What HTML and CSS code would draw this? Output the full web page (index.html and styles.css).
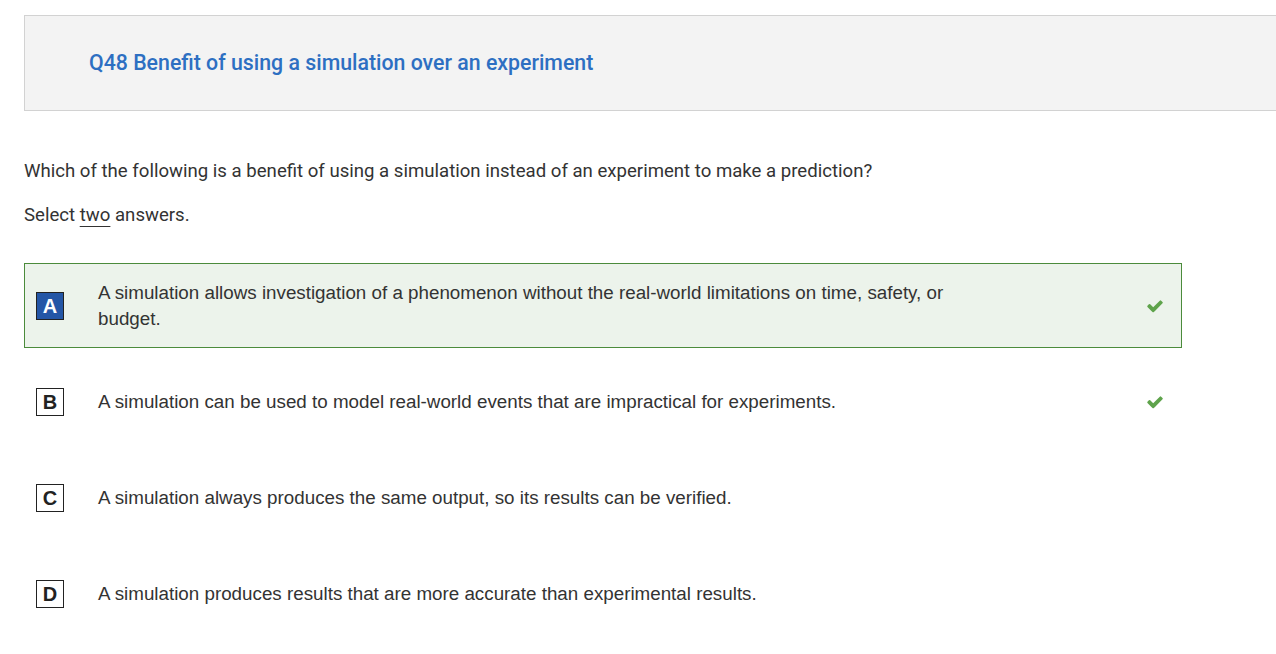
FILE: index.html
```html
<!DOCTYPE html>
<html>
<head>
<meta charset="utf-8">
<link rel="stylesheet" href="styles.css">
</head>
<body>
<div class="page">
  <div class="header">
    <h1 class="title">Q48 Benefit of using a simulation over an experiment</h1>
  </div>
  <p class="question">Which of the following is a benefit of using a simulation instead of an experiment to make a prediction?</p>
  <p class="instruction">Select <span class="ul">two</span> answers.</p>
  <div class="options">
    <div class="option selected">
      <span class="badge">A</span>
      <span class="text">A simulation allows investigation of a phenomenon without the real-world limitations on time, safety, or budget.</span>
      <span class="mark"><svg viewBox="0 0 1792 1792" width="18" height="18"><path fill="#5ea34b" d="M1671 566q0 40-28 68l-724 724-136 136q-28 28-68 28t-68-28l-136-136-362-362q-28-28-28-68t28-68l136-136q28-28 68-28t68 28l294 295 656-657q28-28 68-28t68 28l136 136q28 28 28 68z"/></svg></span>
    </div>
    <div class="option">
      <span class="badge">B</span>
      <span class="text">A simulation can be used to model real-world events that are impractical for experiments.</span>
      <span class="mark"><svg viewBox="0 0 1792 1792" width="18" height="18"><path fill="#5ea34b" d="M1671 566q0 40-28 68l-724 724-136 136q-28 28-68 28t-68-28l-136-136-362-362q-28-28-28-68t28-68l136-136q28-28 68-28t68 28l294 295 656-657q28-28 68-28t68 28l136 136q28 28 28 68z"/></svg></span>
    </div>
    <div class="option">
      <span class="badge">C</span>
      <span class="text">A simulation always produces the same output, so its results can be verified.</span>
      <span class="mark"></span>
    </div>
    <div class="option">
      <span class="badge">D</span>
      <span class="text">A simulation produces results that are more accurate than experimental results.</span>
      <span class="mark"></span>
    </div>
  </div>
</div>
</body>
</html>
```

FILE: styles.css
```css
html, body {
  margin: 0;
  padding: 0;
  background: #ffffff;
}
.page {
  padding: 15px 0 0 24px;
  overflow: hidden;
}
.header {
  background: #f3f3f3;
  border: 1px solid #d2d2d2;
  border-right: none;
  height: 94px;
  display: flex;
  align-items: center;
  padding-left: 64px;
  margin-right: -2px;
}
.title {
  margin: 0;
  font-family: Roboto, "Liberation Sans", sans-serif;
  font-weight: 500;
  font-size: 21.3px;
  color: #2d6fc2;
  padding-bottom: 2px;
}
.question {
  margin: 49px 0 0 0;
  font-family: Roboto, "Liberation Sans", sans-serif;
  font-size: 18.6px;
  line-height: 22px;
  color: #333333;
}
.instruction {
  margin: 22px 0 0 0;
  font-family: Roboto, "Liberation Sans", sans-serif;
  font-size: 18.6px;
  line-height: 22px;
  color: #333333;
}
.ul {
  text-decoration: underline;
  text-underline-offset: 5px;
  text-decoration-thickness: 1px;
}
.options {
  margin-top: 37px;
  width: 1158px;
  display: flex;
  flex-direction: column;
  gap: 11px;
}
.option {
  height: 85px;
  box-sizing: border-box;
  border: 1px solid transparent;
  display: flex;
  align-items: center;
  padding-left: 11px;
  font-family: "Liberation Sans", Arial, sans-serif;
  font-size: 18.8px;
  line-height: 26px;
  color: #333333;
}
.option.selected {
  background: #ecf3eb;
  border-color: #4b8b3b;
}
.badge {
  flex: none;
  width: 26px;
  height: 26px;
  border: 1px solid #222222;
  display: flex;
  align-items: center;
  justify-content: center;
  font-weight: bold;
  font-size: 20px;
  color: #222222;
  background: #ffffff;
}
.selected .badge {
  background: #2456a6;
  color: #ffffff;
}
.text {
  flex: none;
  width: 880px;
  margin-left: 34px;
}
.mark {
  flex: 1;
  display: flex;
  justify-content: flex-end;
  padding-right: 17px;
}
.mark svg {
  display: block;
}
```
